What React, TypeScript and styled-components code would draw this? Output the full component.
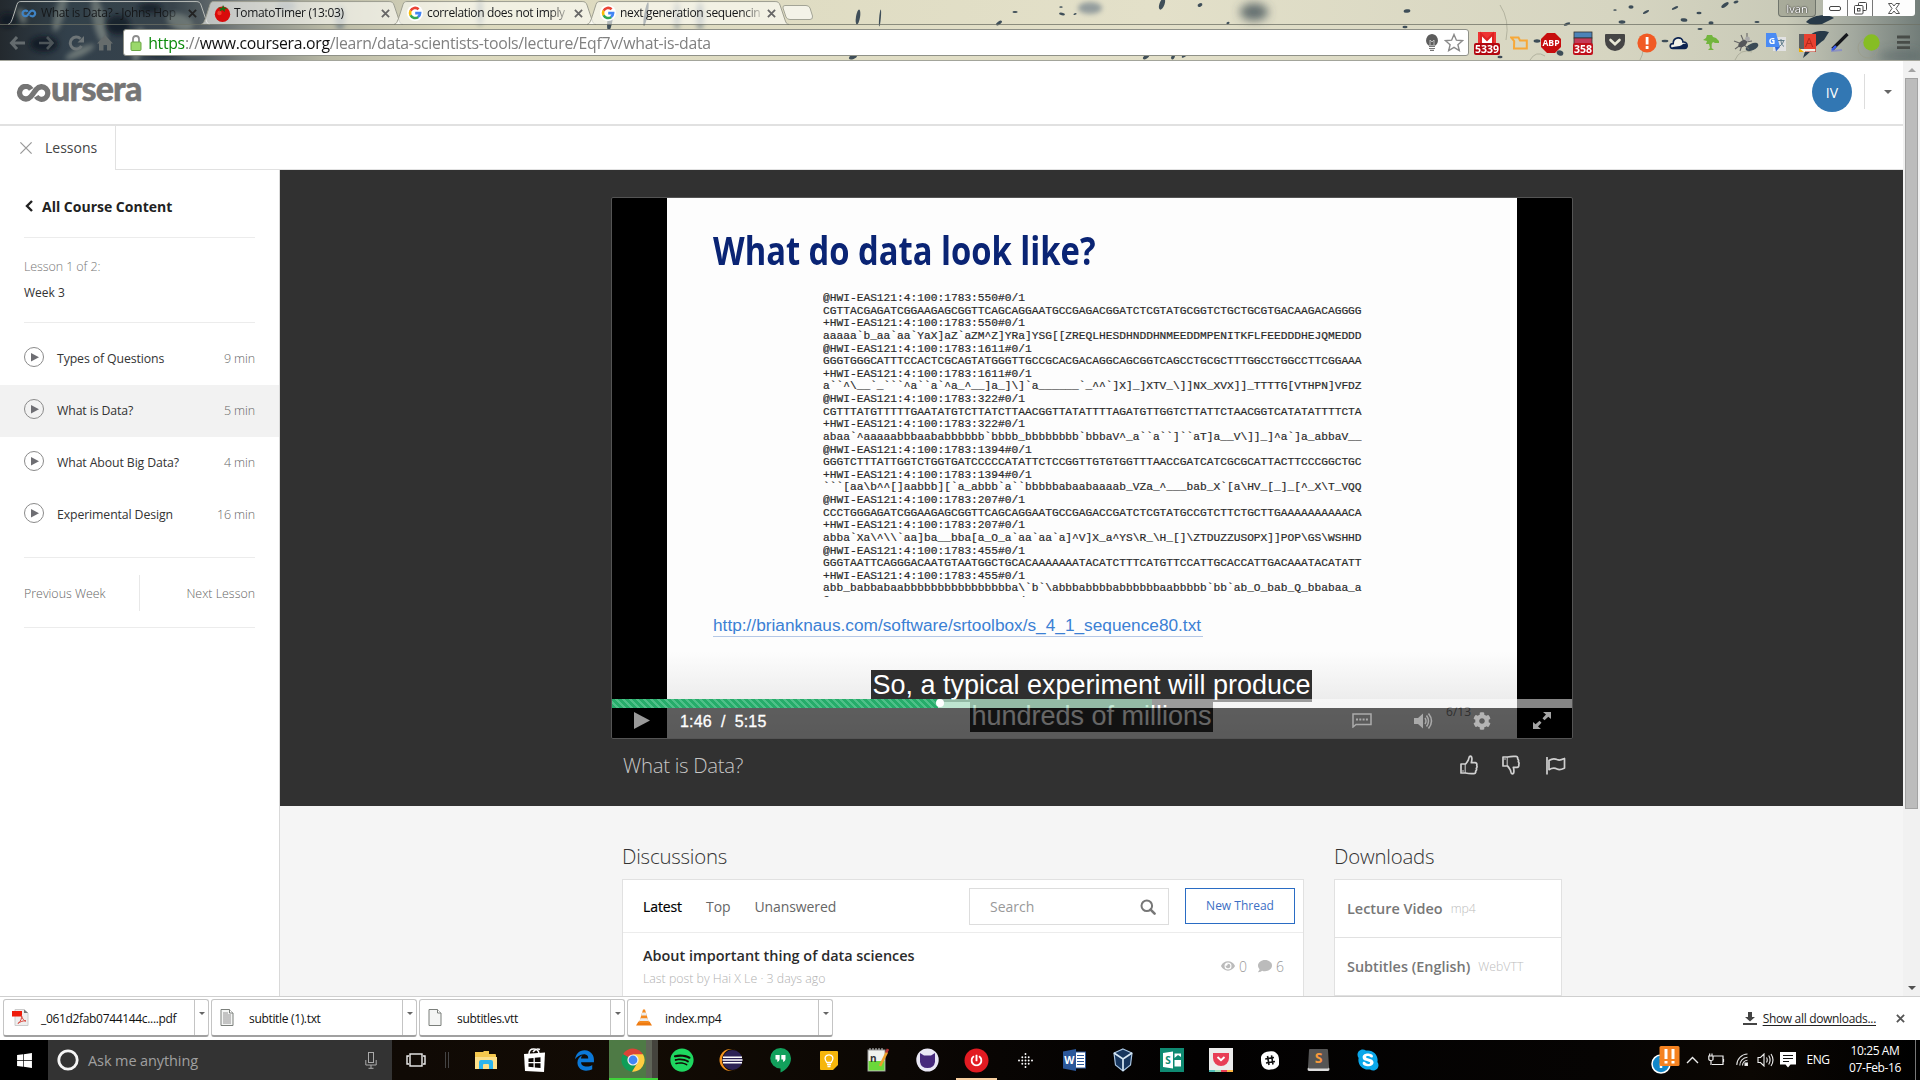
import React from "react";
import styled, { createGlobalStyle, css } from "styled-components";
import { FaSpotify, FaWindows, FaSkype, FaEdgeLegacy, FaCog, FaEye, FaComment, FaPowerOff } from "react-icons/fa";

const Global = createGlobalStyle`
  * { box-sizing: border-box; }
  html, body { margin: 0; padding: 0; }
  body { font-family: "Open Sans", "Noto Sans", sans-serif; overflow: hidden; color: #333; }
  svg { display: block; flex: none; }
`;

const Screen = styled.div`
  width: 1920px;
  height: 1080px;
  display: flex;
  flex-direction: column;
  overflow: hidden;
  background: #fff;
`;

const Spaced = styled.div<{ $l?: number; $r?: number }>`
  margin: 0 ${(p) => p.$r ?? 0}px 0 ${(p) => p.$l ?? 0}px;
`;

/* ---------- browser chrome ---------- */

const Chrome = styled.header`
  position: relative;
  height: 61px;
  flex: none;
  border-bottom: 1px solid #a3a59b;
  overflow: hidden;
`;
const Wallpaper = styled.svg`
  position: absolute;
  inset: 0;
`;
const TabStrip = styled.div`
  position: relative;
  display: flex;
  height: 24px;
  padding-left: 8px;
`;
const TabBox = styled.div`
  position: relative;
  width: 202px;
  height: 24px;
  margin-right: -9px;
  padding: 2px 13px 0 13px;
  display: flex;
  align-items: center;
`;
const TabShape = styled.svg`
  position: absolute;
  left: 0;
  top: 0;
`;
const TabIcon = styled.span`
  position: relative;
  width: 16px;
  height: 16px;
  display: flex;
  align-items: center;
`;
const TabTitle = styled.span`
  position: relative;
  flex: 1;
  min-width: 0;
  margin: -1px 5px 0 4px;
  font-size: 12px;
  letter-spacing: -0.35px;
  line-height: 18px;
  white-space: nowrap;
  color: #16181a;
  mask-image: linear-gradient(90deg, #000 86%, rgba(0, 0, 0, 0.15));
`;
const TabClose = styled.svg`
  position: relative;
`;
const WindowControls = styled.div`
  position: absolute;
  right: 5px;
  top: 0;
  display: flex;
`;
const UserButton = styled.div`
  width: 38px;
  height: 17px;
  margin-right: 7px;
  border: 1px solid #70756c;
  border-top: 0;
  border-radius: 0 0 4px 4px;
  background: rgba(150, 153, 138, 0.65);
  color: #fff;
  font-size: 11px;
  line-height: 17px;
  text-align: center;
  text-shadow: 0 0 2px #222, 0 0 1px #222;
`;
const WinButton = styled.div<{ $w: number }>`
  width: ${(p) => p.$w}px;
  height: 16px;
  background: #fdfdfd;
  border-right: 1px solid #777;
  display: flex;
  align-items: center;
  justify-content: center;
  &:last-child { border-right: 0; border-radius: 0 0 3px 0; }
`;
const Toolbar = styled.div`
  position: relative;
  display: flex;
  align-items: center;
  height: 37px;
  border-top: 1px solid rgba(110, 112, 100, 0.75);
  padding: 0 0 0 3px;
`;
const NavButton = styled.div`
  width: 29.3px;
  display: flex;
  justify-content: center;
`;
const Omnibox = styled.div`
  width: 1346px;
  height: 27px;
  margin: -1px 0 0 3px;
  border: 1px solid #8f9188;
  border-radius: 3px;
  background: #fff;
  display: flex;
  align-items: center;
  gap: 5px;
  padding: 0 4px 0 6px;
`;
const Url = styled.span`
  flex: 1;
  margin: 0 0 0 1px;
  font-size: 15.8px;
  letter-spacing: -0.28px;
  line-height: 22px;
  color: #808080;
  white-space: nowrap;
  b { font-weight: 400; color: #0b8a0b; }
  i { font-style: normal; color: #111; }
`;
const Extensions = styled.div`
  display: flex;
  margin: -1px 0 0 2px;
`;
const Ext = styled.div`
  width: 32.1px;
  height: 30px;
  display: flex;
  align-items: center;
  justify-content: center;
`;

/* ---------- page ---------- */

const Viewport = styled.div`
  display: flex;
  height: 935px;
  flex: none;
  overflow: hidden;
`;
const Page = styled.div`
  width: 1903px;
  display: flex;
  flex-direction: column;
`;
const Scrollbar = styled.div`
  width: 17px;
  background: #f1f1f1;
  display: flex;
  flex-direction: column;
  align-items: center;
  padding: 7px 0 6px;
`;
const Thumb = styled.div`
  width: 13px;
  height: 731px;
  margin: 6px 0 auto;
  background: #bcbcbc;
  border: 1px solid #a3a3a3;
`;
const SiteHeader = styled.div`
  height: 65px;
  flex: none;
  display: flex;
  align-items: center;
  padding: 0 11px 2px 16px;
  border-bottom: 2px solid #e1e1e1;
`;
const Brand = styled.div`
  display: flex;
  align-items: center;
  height: 30px;
  margin: 2px auto 0 0;
  color: #757575;
`;
const BrandName = styled.span`
  font-family: Lato, sans-serif;
  font-weight: 900;
  font-size: 34px;
  line-height: 30px;
  letter-spacing: -0.8px;
  margin: -9px 0 0 -1px;
  -webkit-text-stroke: 0.5px #757575;
`;
const Avatar = styled.div`
  width: 40px;
  height: 40px;
  border-radius: 50%;
  background: #3277b3;
  color: #fff;
  font-size: 14px;
  line-height: 41px;
  text-align: center;
`;
const HeaderRule = styled.div`
  width: 1px;
  height: 35px;
  margin: 0 19px 0 12px;
  background: #ddd;
`;
const LessonBar = styled.div`
  height: 44px;
  flex: none;
  display: flex;
  border-bottom: 1px solid #e1e1e1;
`;
const LessonTab = styled.div`
  width: 116px;
  height: 44px;
  background: #fff;
  border-right: 1px solid #e1e1e1;
  display: flex;
  align-items: center;
  gap: 12px;
  padding: 0 0 1px 19px;
  font-size: 14px;
  color: #444;
`;
const Columns = styled.div`
  display: flex;
  flex: 1;
  min-height: 0;
`;
const Sidebar = styled.nav`
  width: 280px;
  border-right: 1px solid #d9d9d9;
  background: #fff;
  display: flex;
  flex-direction: column;
`;
const BackLink = styled.div`
  height: 68px;
  margin: 0 24px;
  padding: 5px 0 0 1px;
  border-bottom: 1px solid #ececec;
  display: flex;
  align-items: center;
  gap: 9px;
  font-size: 14px;
  font-weight: 700;
  letter-spacing: 0;
  color: #222;
`;
const WeekInfo = styled.div`
  height: 85px;
  margin: 0 24px 10px;
  padding: 16px 0 0;
  border-bottom: 1px solid #ececec;
  font-size: 12px;
  line-height: 26px;
  color: #333;
  span { color: #777; font-weight: 300; font-size: 12.5px; letter-spacing: -0.1px; }
`;
const LessonRow = styled.div<{ $active?: boolean }>`
  height: 52px;
  padding: 0 24px 2px;
  display: flex;
  align-items: center;
  background: ${(p) => (p.$active ? "#f2f2f2" : "transparent")};
  font-size: 12.3px;
  letter-spacing: -0.12px;
  svg { margin: -2px 13px 0 0; }
`;
const LessonTime = styled.span`
  margin-left: auto;
  font-weight: 300;
  font-size: 12.5px;
  color: #666;
`;
const WeekNav = styled.div`
  margin: 16px 24px 0;
  height: 71px;
  padding-top: 1px;
  border-top: 1px solid #ececec;
  border-bottom: 1px solid #ececec;
  display: grid;
  grid-template-columns: 1fr 1px 1fr;
  align-items: center;
  font-size: 12.4px;
  font-weight: 300;
  color: #666;
  span:last-child { text-align: right; }
`;
const NavRule = styled.i`
  width: 1px;
  height: 36px;
  background: #e8e8e8;
`;
const Main = styled.main`
  width: 1623px;
  background: #f5f5f5;
  display: flex;
  flex-direction: column;
`;
const Stage = styled.section`
  height: 636px;
  flex: none;
  background: #313131;
  padding: 27px 0 0 331px;
`;

/* ---------- video player ---------- */

const Player = styled.div`
  position: relative;
  width: 962px;
  height: 542px;
  border: 1px solid #545454;
  background: #000;
  border-radius: 2px;
  overflow: hidden;
`;
const Slide = styled.div`
  position: relative;
  width: 850px;
  height: 540px;
  margin-left: 55px;
  padding: 25px 0 0 46px;
  background: linear-gradient(#fdfdfd 84%, #ececec 93%, #e0e0e0);
`;
const SlideTitle = styled.h1`
  margin: 0;
  width: 500px;
  height: 54px;
  font-size: 40px;
  font-weight: 700;
  line-height: 54px;
  color: #0a2474;
  white-space: nowrap;
  transform: scaleX(0.818);
  transform-origin: 0 0;
`;
const Sequence = styled.pre`
  margin: 15px 0 0 110px;
  height: 305px;
  overflow: hidden;
  font-family: "Liberation Mono", "DejaVu Sans Mono", monospace;
  font-size: 11.22px;
  line-height: 12.63px;
  color: #2a2a2a;
  -webkit-text-stroke: 0.2px #2a2a2a;
`;
const SlideLink = styled.div`
  width: 490px;
  height: 23px;
  margin-top: 17px;
  border-bottom: 1px solid #b5c8e6;
  font-family: "Liberation Sans", Arial, sans-serif;
  font-size: 17.25px;
  line-height: 22px;
  color: #3b80d4;
  white-space: nowrap;
`;
const SlideCount = styled.span`
  position: absolute;
  right: 46px;
  bottom: 18px;
  font-size: 12px;
  color: #777;
`;
const Caption = styled.div<{ $x: number; $y: number; $w: number; $h: number }>`
  position: absolute;
  left: ${(p) => p.$x}px;
  top: ${(p) => p.$y}px;
  width: ${(p) => p.$w}px;
  height: ${(p) => p.$h}px;
  background: #2f2f2f;
  color: #fff;
  font-family: "Liberation Sans", Arial, sans-serif;
  font-size: 27px;
  line-height: 31px;
  text-align: center;
  white-space: nowrap;
`;
const Track = styled.div`
  position: absolute;
  left: 0;
  top: 501px;
  width: 960px;
  height: 9px;
  background: rgba(255, 255, 255, 0.52);
  display: flex;
  align-items: center;
`;
const Played = styled.div`
  width: 326px;
  height: 9px;
  background: repeating-linear-gradient(45deg, #26ac6a 0 3px, #4fc089 3px 4.95px);
`;
const Buffered = styled.div`
  width: 214px;
  height: 9px;
  background: rgba(140, 215, 175, 0.52);
`;
const Knob = styled.div`
  width: 8px;
  height: 8px;
  margin: -2px -6px 0 -2px;
  border-radius: 50%;
  background: #fff;
  position: relative;
`;
const Controls = styled.div`
  position: absolute;
  left: 0;
  top: 510px;
  width: 960px;
  height: 30px;
  background: rgba(0, 0, 0, 0.6);
  display: flex;
  align-items: center;
  padding: 0 21px 5px 22px;
`;
const Clock = styled.span`
  margin: 3px auto 0 30px;
  font-family: "Liberation Sans", Arial, sans-serif;
  font-size: 16px;
  letter-spacing: 0.15px;
  color: #fff;
  white-space: pre;
  -webkit-text-stroke: 0.3px #fff;
`;
const VideoFooter = styled.div`
  display: flex;
  align-items: center;
  width: 961px;
  height: 50px;
  padding: 2px 6px 0 12px;
  color: #c6c6c6;
  font-size: 20.4px;
  font-weight: 300;
  letter-spacing: -0.3px;
  span { margin-right: auto; }
`;

/* ---------- discussions and downloads ---------- */

const Lower = styled.section`
  display: flex;
  flex: 1;
  min-height: 0;
  gap: 30px;
  padding: 34px 0 0 342px;
`;
const Heading = styled.h2`
  margin: 0;
  height: 39px;
  font-size: 20.4px;
  line-height: 32px;
  font-weight: 300;
  letter-spacing: -0.2px;
  color: #333;
`;
const Card = styled.div<{ $w: number }>`
  width: ${(p) => p.$w}px;
  height: 160px;
  border: 1px solid #e1e1e1;
  background: #fff;
`;
const Filters = styled.div`
  height: 53px;
  border-bottom: 1px solid #ececec;
  display: flex;
  align-items: center;
  padding: 0 8px 0 20px;
  font-size: 14px;
  color: #666;
`;
const Filter = styled.span<{ $active?: boolean }>`
  margin-right: 24px;
  letter-spacing: -0.1px;
  ${(p) => p.$active && css`color: #000; -webkit-text-stroke: 0.2px #000;`}
`;
const SearchField = styled.div`
  width: 200px;
  height: 37px;
  margin: 1px 16px 0 auto;
  padding: 0 12px 0 20px;
  border: 1px solid #ddd;
  display: flex;
  align-items: center;
  justify-content: space-between;
  color: #999;
`;
const NewThread = styled.div`
  width: 110px;
  height: 36px;
  border: 1px solid #2a6cc4;
  color: #3c6fc4;
  font-size: 12px;
  line-height: 34px;
  text-align: center;
`;
const Thread = styled.div`
  display: flex;
  padding: 13px 19px 0 20px;
  justify-content: space-between;
`;
const ThreadTitle = styled.div`
  font-size: 14.45px;
  font-weight: 600;
  line-height: 20px;
  color: #2b2b2b;
`;
const ThreadMeta = styled.div`
  margin-top: 3px;
  font-size: 12.35px;
  line-height: 20px;
  color: #b0b0b0;
  font-weight: 300;
`;
const Stats = styled.div`
  display: flex;
  align-items: center;
  height: 20px;
  margin-top: 10px;
  gap: 4px;
  font-size: 14px;
  font-weight: 300;
  color: #999;
  svg { color: #bbb; }
  svg + span { margin-right: 7px; }
  span:last-child { margin-right: 0; }
`;
const DownloadLink = styled.div`
  height: 58px;
  padding: 0 0 0 12px;
  border-bottom: 1px solid #e1e1e1;
  display: flex;
  align-items: center;
  gap: 8px;
  font-size: 14.45px;
  font-weight: 600;
  color: #777;
  small { font-size: 12.3px; font-weight: 300; color: #bdbdbd; }
`;

/* ---------- download shelf ---------- */

const Shelf = styled.div`
  height: 44px;
  flex: none;
  border-top: 1px solid #cfcfcf;
  background: #fff;
  display: flex;
  align-items: center;
  gap: 2px;
  padding: 0 15px 1px 3px;
`;
const FileChip = styled.div`
  width: 206px;
  height: 38px;
  border: 1px solid #c4c4c4;
  border-bottom: 2px solid #a0a0a0;
  border-radius: 3px;
  display: flex;
  font-size: 12px;
  letter-spacing: -0.33px;
  color: #111;
`;
const FileBody = styled.div`
  flex: 1;
  display: grid;
  grid-template-columns: 29px 1fr;
  align-items: center;
  padding: 0 0 0 8px;
  border-right: 1px solid #c4c4c4;
  span { margin: 2px 0 0 0; white-space: nowrap; }
`;
const FileMenu = styled.div`
  width: 13px;
  display: flex;
  justify-content: center;
  padding-top: 12px;
`;
const ShowAll = styled.div`
  margin-left: auto;
  display: flex;
  align-items: center;
  font-size: 12px;
  letter-spacing: -0.32px;
  color: #222;
  u { margin: 1px 20px 0 6px; text-underline-offset: 2px; }
`;

/* ---------- taskbar ---------- */

const Taskbar = styled.footer`
  height: 40px;
  flex: none;
  display: flex;
  background: linear-gradient(90deg, #000 0, #100a05 400px, #120b04 640px, #0b0704 900px, #020101 1200px, #060403 1600px, #0b0703 1750px, #000);
`;
const StartButton = styled.div`
  width: 48px;
  display: flex;
  align-items: center;
  justify-content: center;
  color: #fff;
  background: #000;
`;
const Cortana = styled.div`
  width: 344px;
  background: #333;
  display: flex;
  align-items: center;
  padding: 0 15px 0 9px;
  font-size: 14.5px;
  letter-spacing: -0.1px;
  color: #a0a0a0;
  span { margin: 0 auto 0 9px; }
`;
const TaskView = styled.div`
  width: 70px;
  display: flex;
  align-items: center;
  justify-content: space-between;
  padding: 0 13px 0 14px;
`;
const TaskItem = styled.div<{ $on?: boolean; $mark?: boolean }>`
  position: relative;
  width: 48.98px;
  display: flex;
  align-items: center;
  justify-content: center;
  ${(p) => p.$on && css`background: linear-gradient(90deg, #4e7a45 0 36.5px, #5f6458 36.5px 43px, #44433d 43px); border-bottom: 2px solid #3fd23a; padding-top: 2px;`}
  ${(p) => p.$mark && css`&::after { content: ""; position: absolute; left: 4px; right: 4px; bottom: 0; height: 2px; background: #f7cfa0; }`}
`;
const SkypeBadge = styled.div`
  background: radial-gradient(circle, #fff 45%, transparent 46%);
`;
const Tray = styled.div`
  margin-left: auto;
  display: flex;
  align-items: center;
  color: #fff;
  font-size: 12px;
  letter-spacing: -0.4px;
`;
const TrayIcon = styled.div<{ $w: number }>`
  width: ${(p) => p.$w}px;
  margin-top: -1px;
  display: flex;
  justify-content: center;
`;
const DateTime = styled.div`
  width: 80px;
  margin-top: -2px;
  text-align: center;
  line-height: 17px;
  white-space: nowrap;
`;
const PeekEdge = styled.div`
  width: 5px;
  height: 40px;
  border-left: 1px solid #777;
`;

/* ---------- icons ---------- */

const GoogleG = () => (
  <svg width="16" height="16" viewBox="0 0 16 16">
    <circle cx="8" cy="8" r="8" fill="#fff" />
    <g fill="none" strokeWidth="2.6">
      <path d="M11.6 4.3A5 5 0 0 0 3.6 5.8" stroke="#ea4335" />
      <path d="M3.6 5.6A5.2 5.2 0 0 0 3.6 10.4" stroke="#fbbc05" />
      <path d="M3.6 10.2A5 5 0 0 0 11.3 11.9" stroke="#34a853" />
      <path d="M11 12A5 5 0 0 0 13.1 8.1H8.2" stroke="#4285f4" />
    </g>
  </svg>
);
const Infinity = ({ w, h, color, sw }: { w: number; h: number; color: string; sw: number }) => (
  <svg width={w} height={h} viewBox="0 0 36 18" fill="none" stroke={color} strokeWidth={sw}>
    <path d="M15.2 5.4A6.3 6.3 0 1 0 14.6 12.8C17 10.5 18.4 7.5 20.6 5.1A6.3 6.3 0 1 1 20.2 12.4" />
  </svg>
);
const Tomato = () => (
  <svg width="17" height="17" viewBox="0 0 17 17">
    <circle cx="8.5" cy="9.3" r="7.7" fill="#d90b0b" />
    <circle cx="5.5" cy="8" r="2.2" fill="#f33c2d" />
    <path d="M4 2.5L8 3 9 0l1.5 2.8L14 3l-3.5 1.6L11 7 8.3 5 5.5 6.6 6.5 4.2z" fill="#1f6b12" />
  </svg>
);
const Cross = ({ s = 9, color = "#555", w = 2 }) => (
  <svg width={s} height={s} viewBox="0 0 10 10" stroke={color} strokeWidth={w}>
    <path d="M1 1L9 9M9 1L1 9" />
  </svg>
);
const Caret = ({ w = 8, color = "#555" }) => (
  <svg width={w} height={w / 2} viewBox="0 0 8 4"><path d="M0 0H8L4 4z" fill={color} /></svg>
);
const SearchIcon = () => (
  <svg width="16" height="16" viewBox="0 0 16 16" fill="none" stroke="#777">
    <circle cx="6.8" cy="6.8" r="5.3" strokeWidth="2" />
    <path d="M10.6 10.6L14.6 14.6" strokeWidth="2.5" strokeLinecap="round" />
  </svg>
);
const PlayCircle = () => (
  <svg width="20" height="20" viewBox="0 0 20 20">
    <circle cx="10" cy="10" r="9.5" fill="none" stroke="#8b8b8b" />
    <path d="M7 6L15 10.2 7 14.4z" fill="#6e6e73" />
  </svg>
);
const ThumbOutline = ({ down }: { down?: boolean }) => (
  <svg width="18" height="20" viewBox="0 0 18 20" fill="none" stroke="#d0d0d0" strokeWidth="1.7" strokeLinejoin="round"
    transform={down ? "scale(1,-1)" : undefined}>
    <path d="M5.5 9H1V18H5.5C8 18.6 10 19 14 18.6 16 18.4 15.8 16.6 15.6 16.2 16.8 15.2 16.5 13.8 16.3 13.4 17.4 12 17 10.9 16.7 10.4 17.3 8.6 16 7.7 15.2 7.7H11.3C12 5.5 12.6 1.3 10.2 1.2 8.6 1.2 9 4 8.2 5.2 7.2 6.8 6.3 8.4 5.5 9z" />
    <path d="M5.2 9V18" strokeWidth="1" /><circle cx="3" cy="16" r=".5" strokeWidth=".8" />
  </svg>
);
const FlagIcon = () => (
  <svg width="21" height="19" viewBox="0 0 21 19" fill="none" stroke="#d0d0d0" strokeWidth="1.7" strokeLinejoin="round">
    <path d="M2 1V18.5" />
    <path d="M4 4.5C7 2.5 9.5 2.3 12 3.6 15 5 17 3.7 19.5 2.5V12C17 13.3 15 14.5 12 13 9.5 11.7 7 12 4 13.7z" />
  </svg>
);
const PageIcon = ({ lines }: { lines?: boolean }) => (
  <svg width="14" height="17" viewBox="0 0 14 17">
    <path d="M1 .5H9.5L13 4V16.5H1z" fill="#f4f5f4" stroke="#7b7f7b" />
    <path d="M9.5 .5V4H13" fill="#fff" stroke="#7b7f7b" />
    {lines && <path d="M3 4H8M3 6H11M3 8H11M3 10H11M3 12H11M3 14H11" stroke="#888" strokeWidth=".9" />}
  </svg>
);
const PdfIcon = () => (
  <svg width="17" height="17" viewBox="0 0 17 17">
    <path d="M3 .5H12L16 4V16.5H3z" fill="#eeeeee" stroke="#ccc" />
    <path d="M12 .5V4H16z" fill="#777" />
    <rect y="2" width="10" height="5.5" fill="#ee1c0b" />
    <path d="M6 14.5C9 12 10 9 9.5 6.5 10.5 10 11.5 11.5 14 12 11 11.5 8.5 12.5 6 14.5z" fill="none" stroke="#d9463c" />
  </svg>
);
const Cone = () => (
  <svg width="16" height="17" viewBox="0 0 16 17">
    <path d="M2.5 12.5H13.5L16 16.5H0z" fill="#ee7a10" />
    <path d="M7 .5H9L13 14H3z" fill="#f58a1f" />
    <path d="M6.2 3.5H9.8L10.7 6.5H5.3zM4.5 9.3H11.5L12.3 12H3.7z" fill="#ececec" />
  </svg>
);

const Drops = [
  [610, 20, 3, 13, 8], [646, 14, 2, 14, 10], [858, 17, 2.4, 9, 9], [880, 18, 1, 10, 5], [853, 57, 5, 2.4, -20], [999, 23, 4, 1.8, -35],
  [1015, 12, 3, 1.2, 0], [1062, 14, 3.5, 1.5, 10], [1061, 7, 2, 1, 0], [1075, 14, 2, 1, -20], [1200, 5, 3, 2, -30], [1228, 23, 2, 1.2, -30],
  [1146, 57, 4, 2, -30], [1173, 57, 2, 3, 30], [1184, 56, 3, 1.5, -30], [1162, 4, 3, 7, 20], [1407, 11, 4, 2, -10], [1405, 27, 3, 1.5, 0],
  [1500, 57, 3, 1.5, 0], [1560, 53, 4, 3, 20], [1567, 24, 4, 1.5, -20], [1622, 22, 4, 2, 0], [1631, 7, 3, 2, 0], [1646, 12, 4, 1.4, -30],
  [1675, 8, 4, 1.4, -25], [1684, 20, 4, 2, 10], [1699, 13, 3, 1.4, 0], [1700, 29, 3, 1.2, 0], [1711, 23, 3, 2, 0], [1725, 5, 5, 2, -35],
  [1736, 2, 3, 1.5, -20], [1757, 22, 3, 1.3, 0], [1752, 47, 8, 4, -25], [1665, 41, 4, 1.5, 0], [1615, 10, 2, 1, 0], [1537, 41, 4, 2, 0],
];
const LightStreaks = [
  [60, 12, 5, 20, 15], [99, 20, 6, 24, -12], [138, 45, 5, 18, 10], [22, 16, 4, 8, -20], [180, 22, 14, 8, 20], [190, 50, 12, 5, 0], [80, 52, 16, 4, -25],
];

const Backdrop = () => (
  <Wallpaper width="1920" height="61" viewBox="0 0 1920 61">
    <defs>
      <linearGradient id="sky">
        <stop offset="0" stopColor="#23292e" /><stop offset=".035" stopColor="#32404b" /><stop offset=".09" stopColor="#38434c" />
        <stop offset=".125" stopColor="#7c8280" /><stop offset=".17" stopColor="#b9b9a5" /><stop offset=".24" stopColor="#dcd9be" />
        <stop offset=".6" stopColor="#e3e0c9" /><stop offset=".84" stopColor="#d6d5c1" /><stop offset=".93" stopColor="#c9cab8" />
        <stop offset=".965" stopColor="#a3a99f" /><stop offset="1" stopColor="#727d79" />
      </linearGradient>
      <filter id="soft"><feGaussianBlur stdDeviation="2.5" /></filter>
      <filter id="wide"><feGaussianBlur stdDeviation="5" /></filter>
    </defs>
    <rect width="1920" height="61" fill="url(#sky)" />
    <g filter="url(#soft)" fill="#87908a" opacity=".7">
      {LightStreaks.map(([x, y, rx, ry, a]) => <ellipse key={x} cx={x} cy={y} rx={rx} ry={ry} transform={`rotate(${a} ${x} ${y})`} />)}
    </g>
    <g filter="url(#soft)" fill="#101820" opacity=".8">
      <ellipse cx="8" cy="20" rx="9" ry="7" /><ellipse cx="44" cy="44" rx="14" ry="8" /><ellipse cx="118" cy="25" rx="12" ry="10" />
      <ellipse cx="160" cy="50" rx="14" ry="6" /><ellipse cx="150" cy="8" rx="12" ry="5" />
    </g>
    <g filter="url(#soft)" fill="#52667a" opacity=".55">
      <ellipse cx="340" cy="18" rx="5" ry="12" /><ellipse cx="480" cy="12" rx="3" ry="14" /><ellipse cx="286" cy="6" rx="10" ry="5" />
      <ellipse cx="1090" cy="8" rx="12" ry="6" /><ellipse cx="700" cy="16" rx="4" ry="14" /><ellipse cx="677" cy="16" rx="3" ry="14" />
    </g>
    <g filter="url(#wide)" fill="#46545a"><ellipse cx="1254" cy="12" rx="14" ry="9" opacity=".8" /><ellipse cx="1900" cy="56" rx="22" ry="6" opacity=".4" /></g>
    <g fill="#172b3d">
      {Drops.map(([x, y, rx, ry, a]) => <ellipse key={`${x}-${y}`} cx={x} cy={y} rx={rx * 0.85} ry={ry * 0.85} opacity=".8" transform={`rotate(${a} ${x} ${y})`} />)}
      <path d="M1806 22C1814 14 1828 14 1834 18L1822 24C1816 26 1810 25 1806 22zM1808 38C1812 30 1824 30 1829 32L1824 40C1818 44 1806 56 1803 58 1806 50 1806 44 1808 38z" opacity=".9" />
    </g>
    <g fill="none" stroke="#9a9b88" opacity=".6"><circle cx="1868" cy="48" r="10" /><path d="M1640 60Q1646 50 1640 36M1530 60Q1536 50 1545 56M1735 60Q1740 48 1752 52M1500 5Q1510 20 1506 40" /></g>
  </Wallpaper>
);

const Tab = ({ title, icon, active }: { title: string; icon: React.ReactNode; active?: boolean }) => (
  <TabBox>
    <TabShape width="202" height="25" viewBox="0 0 203 25">
      <path d="M0 24.5C3 24 4 20 6 14L9 4.5C9.8 2 11 1.5 13 1.5H189C192 1.5 193 2.5 194 5L199 20C200 23 201 24.5 203 24.5"
        fill={active ? "rgba(60,70,78,.12)" : "rgba(255,255,250,.6)"} stroke={active ? "#b9bcb8" : "#9c9d90"} />
    </TabShape>
    <TabIcon>{icon}</TabIcon>
    <TabTitle>{title}</TabTitle>
    <TabClose width="9" height="9" viewBox="0 0 10 10" stroke={active ? "#222" : "#666"} strokeWidth="2"><path d="M1 1L9 9M9 1L1 9" /></TabClose>
  </TabBox>
);

const Badge = ({ n, color, children }: { n: string; color: string; children: React.ReactNode }) => (
  <svg width="28" height="26" viewBox="0 0 28 26">
    {children}
    <rect x={n.length > 3 ? 1 : 4} y="13" width={n.length > 3 ? 26 : 20} height="12" rx="2" fill={color} />
    <text x="14" y="22.8" fontSize="10.5" fontWeight="700" fill="#fff" textAnchor="middle" fontFamily="Open Sans, sans-serif">{n}</text>
  </svg>
);

const extensions: React.ReactNode[] = [
  <Badge n="5339" color="#b3060f"><rect x="5" y="2" width="18" height="13" fill="#e33" /><path d="M8 15V4L14 10 20 4V15" fill="#fff" stroke="#d22" strokeWidth="2" /></Badge>,
  <svg width="18" height="14" viewBox="0 0 18 14" fill="none" stroke="#f7a838" strokeWidth="2"><path d="M4 12.5H16.8V4.5H10L8.5 1.5H1.2L4.2 5z" /></svg>,
  <svg width="20" height="20" viewBox="0 0 20 20"><path d="M6 0H14L20 6V14L14 20H6L0 14V6z" fill="#c70d0d" /><text x="10" y="13.3" fontSize="8.6" fontWeight="700" fill="#fff" textAnchor="middle" fontFamily="Open Sans, sans-serif">ABP</text></svg>,
  <Badge n="358" color="#c0101b"><rect x="5" y="2" width="18" height="6" fill="#4c83b8" stroke="#333" strokeWidth=".8" /><rect x="5" y="8" width="18" height="6" fill="#c53a57" stroke="#333" strokeWidth=".8" /></Badge>,
  <svg width="20" height="18" viewBox="0 0 20 18"><path d="M1 0H19Q20 0 20 1V7A10 10 0 0 1 0 7V1Q0 0 1 0z" fill="#454545" /><path d="M5.5 6L10 10.3 14.5 6" fill="none" stroke="#e6e6d4" strokeWidth="2.6" strokeLinecap="round" /></svg>,
  <svg width="20" height="20" viewBox="0 0 20 20"><circle cx="10" cy="10" r="9.6" fill="#f15a24" /><rect x="8.7" y="4" width="2.8" height="7.5" fill="#fff" /><rect x="8.7" y="13" width="2.8" height="3" fill="#fff" /></svg>,
  <svg width="20" height="14" viewBox="0 0 20 14"><path d="M4 12.5C0 12 .5 7.5 4.2 7.6 4 .5 13.5 0 14 6 18.8 5.5 19.5 12 16 12.5z" fill="#f4f4ea" stroke="#0c2350" strokeWidth="1.6" /><path d="M2 13C4 9 10 12 14 8 18 7 20 10 16.5 13z" fill="#0c2350" /></svg>,
  <svg width="18" height="17" viewBox="0 0 18 17"><path d="M1 6L4 4 5 1H10L11 3 14 4 17 7V9H13L11 8 9.7 10V14L12 16H6L8 14 7 10 4 10 5 7z" fill="#72b53d" /></svg>,
  <svg width="20" height="20" viewBox="0 0 20 20"><g stroke="#666" strokeWidth="1.1"><path d="M1 8L9 11M2 16L9 11M8 2L11 9M14 0L14 7M13 9L19 8M11 12L16 16M7 18L9 12" /></g><ellipse cx="10" cy="10.5" rx="5" ry="3" transform="rotate(-35 10 11)" fill="#55575a" /><circle cx="14.500" cy="6" r="2.4" fill="#aaa" /></svg>,
  <svg width="20" height="19" viewBox="0 0 20 19"><rect x="7" y="4" width="13" height="14" fill="#e2e2e2" /><path d="M0 0H10L14 14H0z" fill="#4b8bf4" /><path d="M14 14L10 18.5 9 14z" fill="#3367d6" /><path d="M12 7.5H18.5M15 6V8C15 11 17 13 18 13.5M17.5 8C17 11 14 13 13 13.5" stroke="#607d8b" fill="none" /><text x="6" y="10.5" fontSize="9" fontWeight="700" fill="#fff" textAnchor="middle" fontFamily="Open Sans, sans-serif">G</text></svg>,
  <svg width="17" height="18" viewBox="0 0 17 18"><rect width="17" height="15" fill="#e8402f" /><rect width="5" height="15" fill="#5d6163" /><path d="M0 15H16V18H4z" fill="#f1efe6" /><path d="M0 14L5 18H0z" fill="#f3b200" /><path d="M6 18H17V15" stroke="#c1271b" fill="none" /><text x="10" y="13" fontSize="13" fill="#b1271c" textAnchor="middle" fontFamily="Open Sans, sans-serif">A</text></svg>,
  <svg width="19" height="19" viewBox="0 0 19 19"><path d="M1 18L12 17" stroke="#8b91c2" strokeWidth="2" /><path d="M2.5 16L17.5 1" stroke="#15171c" strokeWidth="3.2" /><path d="M2 17L6 13" stroke="#3b5cf0" strokeWidth="2.4" /></svg>,
  <svg width="17" height="17"><circle cx="8.5" cy="8.5" r="8.2" fill="#86bd24" /></svg>,
  <svg width="13" height="15" viewBox="0 0 13 15" stroke="#484c48" strokeWidth="2.8"><path d="M0 2H13M0 7.3H13M0 12.6H13" /></svg>,
];

const sequenceText = [
  "@HWI-EAS121:4:100:1783:550#0/1",
  "CGTTACGAGATCGGAAGAGCGGTTCAGCAGGAATGCCGAGACGGATCTCGTATGCGGTCTGCTGCGTGACAAGACAGGGG",
  "+HWI-EAS121:4:100:1783:550#0/1",
  "aaaaa`b_aa`aa`YaX]aZ`aZM^Z]YRa]YSG[[ZREQLHESDHNDDHNMEEDDMPENITKFLFEEDDDHEJQMEDDD",
  "@HWI-EAS121:4:100:1783:1611#0/1",
  "GGGTGGGCATTTCCACTCGCAGTATGGGTTGCCGCACGACAGGCAGCGGTCAGCCTGCGCTTTGGCCTGGCCTTCGGAAA",
  "+HWI-EAS121:4:100:1783:1611#0/1",
  "a``^\\__`_```^a``a`^a_^__]a_]\\]`a______`_^^`]X]_]XTV_\\]]NX_XVX]]_TTTTG[VTHPN]VFDZ",
  "@HWI-EAS121:4:100:1783:322#0/1",
  "CGTTTATGTTTTTGAATATGTCTTATCTTAACGGTTATATTTTAGATGTTGGTCTTATTCTAACGGTCATATATTTTCTA",
  "+HWI-EAS121:4:100:1783:322#0/1",
  "abaa`^aaaaabbbaababbbbbb`bbbb_bbbbbbbb`bbbaV^_a``a``]``aT]a__V\\]]_]^a`]a_abbaV__",
  "@HWI-EAS121:4:100:1783:1394#0/1",
  "GGGTCTTTATTGGTCTGGTGATCCCCCATATTCTCCGGTTGTGTGGTTTAACCGATCATCGCGCATTACTTCCCGGCTGC",
  "+HWI-EAS121:4:100:1783:1394#0/1",
  "```[aa\\b^^[]aabbb][`a_abbb`a``bbbbbabaabaaaab_VZa_^___bab_X`[a\\HV_[_]_[^_X\\T_VQQ",
  "@HWI-EAS121:4:100:1783:207#0/1",
  "CCCTGGGAGATCGGAAGAGCGGTTCAGCAGGAATGCCGAGACCGATCTCGTATGCCGTCTTCTGCTTGAAAAAAAAAACA",
  "+HWI-EAS121:4:100:1783:207#0/1",
  "abba`Xa\\^\\\\`aa]ba__bba[a_O_a`aa`aa`a]^V]X_a^YS\\R_\\H_[]\\ZTDUZZUSOPX]]POP\\GS\\WSHHD",
  "@HWI-EAS121:4:100:1783:455#0/1",
  "GGGTAATTCAGGGACAATGTAATGGCTGCACAAAAAAATACATCTTTCATGTTCCATTGCACCATTGACAAATACATATT",
  "+HWI-EAS121:4:100:1783:455#0/1",
  "abb_babbabaa" + "b".repeat(16) + "a\\`b`\\abbbabbbbabbbbbbaabbbbb`bb`ab_O_bab_Q_bbabaa_a",
  "@HWI-EAS121:4:100:1783:1837#0/1",
].join("\n");

const lessons = [
  ["Types of Questions", "9 min"],
  ["What is Data?", "5 min"],
  ["What About Big Data?", "4 min"],
  ["Experimental Design", "16 min"],
];

const files: [string, React.ReactNode][] = [
  ["_061d2fab0744144c....pdf", <PdfIcon />],
  ["subtitle (1).txt", <PageIcon lines />],
  ["subtitles.vtt", <PageIcon />],
  ["index.mp4", <Cone />],
];

const apps: React.ReactNode[] = [
  <svg width="22" height="19" viewBox="0 0 22 19"><path d="M0 1H8L9 0H14V3H20Q21 3 21 4V18H0z" fill="#f5c84e" /><path d="M0 6H22V18H0z" fill="#fde08a" /><path d="M4 18V11Q4 9 6 9H16Q18 9 18 11V18H14V14Q14 13 13 13H9Q8 13 8 14V18z" fill="#2ab4ee" /></svg>,
  <svg width="22" height="24" viewBox="0 0 22 24"><path d="M0 6L21 4.500 20 24 1 23z" fill="#fff" /><path d="M5 6Q5 1 9.500 1T15 5M9 4Q12 0 16 1.5" fill="none" stroke="#fff" strokeWidth="1.500" /><path d="M4.500 10.500L9.500 10V14H4.500zM10.800 9.800L16.500 9.200V14H10.800zM4.500 15.300H9.500V19.300L4.500 18.800zM10.800 15.300H16.500V20L10.800 19.400z" fill="#0b0704" /></svg>,
  <FaEdgeLegacy size={21} color="#0b78d7" />,
  <svg width="24" height="24" viewBox="0 0 24 24"><path d="M12 12L2 6.2A11.7 11.7 0 0 1 22 6.3z" fill="#db4437" /><path d="M12 12L2 6.2A11.7 11.7 0 0 0 11 23.6L16 14z" fill="#0f9d58" /><path d="M12 6.3H22A11.7 11.7 0 0 1 11 23.7L17 14z" fill="#ffcd40" /><circle cx="12" cy="12" r="5.6" fill="#f1f1f1" /><circle cx="12" cy="12" r="4.4" fill="#4285f4" /></svg>,
  <FaSpotify size={24} color="#1ed760" />,
  <svg width="24" height="24" viewBox="0 0 24 24"><circle cx="11.5" cy="12" r="11" fill="#f7941e" /><circle cx="14" cy="12" r="11" fill="#120b04" /><circle cx="13.5" cy="12" r="10" fill="#2c2255" /><path d="M4 9.2H23M3.5 12H23.5M4 14.8H23" stroke="#fff" strokeWidth="1.4" /></svg>,
  <svg width="21" height="25" viewBox="0 0 21 25"><path d="M10.5 0A10.3 10.3 0 0 0 10.5 20.6V24.6C16 22 21 17 21 10.3A10.4 10.4 0 0 0 10.5 0z" fill="#12a05c" /><path d="M5.5 7H9.7V11.3Q9.4 13.5 7.3 14V11.5H5.5zM11.3 7H15.5V11.3Q15.2 13.5 13.1 14V11.5H11.3z" fill="#fff" /></svg>,
  <svg width="18" height="19" viewBox="0 0 18 19"><path d="M1 0H17Q18 0 18 1V14L13 19H1Q0 19 0 18V1Q0 0 1 0z" fill="#f6b60b" /><path d="M6.8 11.500Q3.500 7 6.500 4.600 9 3 11.500 4.600 14.500 7 11.200 11.500zM7 13.500H11M7.500 15.500H10.500" fill="none" stroke="#fff" strokeWidth="1.300" /></svg>,
  <svg width="22" height="24" viewBox="0 0 22 24"><rect x="1" y="2" width="17" height="21" fill="#f1f3ee" stroke="#999" /><path d="M1.500 13H17.500V22.500H1.500z" fill="#6bd83a" /><path d="M3 2V0M6 2V0M9 2V0M12 2V0M15 2V0" stroke="#ccc" /><text x="3" y="14" fontSize="10" fontWeight="700" fill="#333" fontFamily="Open Sans, sans-serif">n</text><path d="M20 4L13 18" stroke="#eda02c" strokeWidth="2.600" /><path d="M19.200 4.500L21 1" stroke="#b33" strokeWidth="2.600" /></svg>,
  <svg width="23" height="24" viewBox="0 0 23 24"><ellipse cx="11.500" cy="12" rx="11.200" ry="11.500" fill="#e9e7f5" /><path d="M4 5L8 7.500H15L19 5V14Q18 20 11.500 20T4 14z" fill="#46297c" /></svg>,
  <svg width="25" height="25" viewBox="0 0 25 25"><circle cx="12.500" cy="12.500" r="12" fill="#e21b22" /><FaPowerOff x="6.500" y="6.500" size={12} color="#fff" /></svg>,
  <svg width="15" height="15" viewBox="0 0 15 15" fill="#fff">
    {[[7.5, 1], [4.3, 4.3], [7.5, 4.3], [10.7, 4.3], [1, 7.5], [4.3, 7.5], [7.5, 7.5], [10.7, 7.5], [14, 7.5], [4.3, 10.7], [7.5, 10.7], [10.7, 10.7], [7.5, 14]].map(([x, y]) => <circle key={`${x} ${y}`} cx={x} cy={y} r=".95" />)}
  </svg>,
  <svg width="23" height="22" viewBox="0 0 23 22"><rect x="10" y="3" width="12.500" height="16" fill="#fff" stroke="#2b579a" /><path d="M14 6.500H21M14 9.500H21M14 12.500H21M14 15.500H21" stroke="#2b579a" /><path d="M0 2.500L13 0V22L0 19.500z" fill="#2b579a" /><text x="6.300" y="15" fontSize="10.500" fontWeight="700" fill="#fff" textAnchor="middle" fontFamily="Open Sans, sans-serif">W</text></svg>,
  <svg width="20" height="24" viewBox="0 0 20 24"><path d="M10 1L19 5 17.500 17 10 23 2.500 17 1 5z" fill="#17365e" stroke="#a9c6e3" strokeWidth="1.200" /><path d="M1 5L10 11 19 5M10 11V23" fill="none" stroke="#d7e8f5" strokeWidth="1.700" /></svg>,
  <svg width="24" height="24" viewBox="0 0 24 24"><rect width="24" height="24" fill="#0f8a72" /><path d="M3 5L13 3.500V20.500L3 19z" fill="#fff" /><path d="M14.500 5.500H21V9L18 7 14.500 10zM14.500 12H21V18.500H14.500z" fill="#fff" /><text x="8" y="16" fontSize="10" fontWeight="700" fill="#0f8a72" textAnchor="middle" fontFamily="Open Sans, sans-serif">S</text></svg>,
  <svg width="24" height="24" viewBox="0 0 24 24"><rect width="24" height="24" fill="#ececec" /><path d="M4 5H20V10A8 8 0 0 1 4 10z" fill="#e83e56" /><path d="M8.500 9L12 12.300 15.500 9" fill="none" stroke="#fff" strokeWidth="1.900" /><path d="M0 22H6V24H0z" fill="#50bcb6" /><path d="M6 22H12V24H6z" fill="#9fdcb4" /><path d="M12 22H18V24H12z" fill="#e83e56" /><path d="M18 22H24V24H18z" fill="#fcb643" /></svg>,
  <svg width="18" height="19" viewBox="0 0 18 19"><rect x="0" y="0.500" width="18" height="18" rx="7" fill="#fff" transform="rotate(-8 9 9)" /><path d="M6.500 5L8 14M10.500 4.300L12 13.500M4.200 8L13 6.500M5 12L14 10.500" stroke="#111" strokeWidth="1.600" /></svg>,
  <svg width="23" height="22" viewBox="0 0 23 22"><path d="M2 16H21L22.500 20Q22.500 22 21 22H2Q.5 22 .5 20z" fill="#ddd" /><path d="M3 0H20Q21 0 21 1L22 18Q22 19.500 20.500 19.500H2.500Q1 19.500 1 18L2 1Q2 0 3 0z" fill="#555" /><text x="11.500" y="13.500" fontSize="14" fontWeight="700" fill="#f6993b" textAnchor="middle" fontFamily="Open Sans, sans-serif">S</text></svg>,
  <SkypeBadge><FaSkype size={24} color="#0aa7ea" /></SkypeBadge>,
];

export default function App() {
  return (
    <Screen>
      <Global />
      <Chrome>
        <Backdrop />
        <TabStrip>
          <Tab active title="What is Data? - Johns Hop" icon={<Infinity w={16} h={9} color="#3f83c4" sw={5} />} />
          <Tab title="TomatoTimer (13:03)" icon={<Tomato />} />
          <Tab title="correlation does not imply" icon={<GoogleG />} />
          <Tab title="next generation sequencin" icon={<GoogleG />} />
          <svg width="34" height="20" viewBox="0 0 34 20"><path d="M5 5.500H26Q29 5.500 30 8L32.500 16Q33 19.500 30 19.500H10Q7 19.500 6 17L3 8Q2.500 5.500 5 5.500z" fill="rgba(255,255,252,.65)" stroke="#a3a496" /></svg>
          <WindowControls>
            <UserButton>Ivan</UserButton>
            <WinButton $w={25}><svg width="12" height="5"><rect x=".5" y=".5" width="11" height="4" rx="1.500" fill="#fff" stroke="#444" /></svg></WinButton>
            <WinButton $w={25}><svg width="13" height="13" fill="#fff" stroke="#444"><rect x="4.500" y=".5" width="8" height="8" rx="1" /><rect x=".5" y="3.500" width="8.500" height="8.500" rx="1" /><rect x="3.500" y="6.500" width="2.500" height="2.500" /></svg></WinButton>
            <WinButton $w={42}><svg width="12" height="11" viewBox="0 0 12 11"><path d="M.5 .5H4L6 3 8 .5H11.500L8 5.500 11.500 10.500H8L6 8 4 10.500H.5L4 5.500z" fill="#fff" stroke="#444" strokeWidth=".9" /></svg></WinButton>
          </WindowControls>
        </TabStrip>
        <Toolbar>
          <NavButton><svg width="17" height="14" viewBox="0 0 17 14" fill="none" stroke="#646b6e" strokeWidth="3"><path d="M8 1L2.500 7 8 13M2.500 7H16" /></svg></NavButton>
          <NavButton><svg width="17" height="14" viewBox="0 0 17 14" fill="none" stroke="#4c5458" strokeWidth="2.600"><path d="M9 1L14.500 7 9 13M14.500 7H1" /></svg></NavButton>
          <NavButton><svg width="17" height="16" viewBox="0 0 17 16"><path d="M13.500 11A6 6 0 1 1 12.500 3.800" fill="none" stroke="#6e7577" strokeWidth="3" /><path d="M9.500 7.500H16V1z" fill="#6e7577" /></svg></NavButton>
          <NavButton><svg width="16" height="16" viewBox="0 0 16 16"><path d="M8 0L16 8.500H14V15.500H10V10H6.500V15.500H2V8.500H0z" fill="#666c6c" /></svg></NavButton>
          <Omnibox>
            <svg width="12" height="16" viewBox="0 0 12 16"><path d="M3 8V4Q3 1 6 1T9 4V8" fill="none" stroke="#8d8d8d" strokeWidth="1.800" /><rect x="1" y="7" width="10" height="8.500" rx="1" fill="#9ad86a" stroke="#6aa644" /></svg>
            <Url><b>https</b>://<i>www.coursera.org</i>/learn/data-scientists-tools/lecture/Eqf7v/what-is-data</Url>
            <svg width="14" height="17" viewBox="0 0 14 17"><path d="M7 0A6.500 6.500 0 0 1 10.500 11.500H3.500A6.500 6.500 0 0 1 7 0z" fill="#5d5d5d" /><path d="M4 12.500H10M4 14.500H10M5 16.300H9" stroke="#777" strokeWidth="1.200" /><path d="M5 11V6L7 8 9 6V11" fill="none" stroke="#bbb" /></svg>
            <svg width="20" height="19" viewBox="0 0 20 19"><path d="M10 1.500L12.400 7.200 18.500 7.700 13.900 11.700 15.300 17.600 10 14.400 4.700 17.600 6.100 11.700 1.500 7.700 7.600 7.200z" fill="#fff" stroke="#8a8a8a" strokeWidth="1.400" /></svg>
          </Omnibox>
          <Extensions>{extensions.map((e, i) => <Ext key={i}>{e}</Ext>)}</Extensions>
        </Toolbar>
      </Chrome>

      <Viewport>
        <Page>
          <SiteHeader>
            <Brand><Infinity w={36} h={18} color="#757575" sw={5.3} /><BrandName>ursera</BrandName></Brand>
            <Avatar>IV</Avatar>
            <HeaderRule />
            <Caret w={8} color="#666" />
          </SiteHeader>
          <LessonBar><LessonTab><Cross s={14} color="#999" w={0.9} />Lessons</LessonTab></LessonBar>
          <Columns>
            <Sidebar>
              <BackLink>
                <svg width="8" height="12" viewBox="0 0 8 12" fill="none" stroke="#222" strokeWidth="2.400"><path d="M7 1L2 6 7 11" /></svg>
                All Course Content
              </BackLink>
              <WeekInfo><span>Lesson 1 of 2:</span><br />Week 3</WeekInfo>
              {lessons.map(([name, time], i) => (
                <LessonRow key={name} $active={i === 1}><PlayCircle />{name}<LessonTime>{time}</LessonTime></LessonRow>
              ))}
              <WeekNav><span>Previous Week</span><NavRule /><span>Next Lesson</span></WeekNav>
            </Sidebar>
            <Main>
              <Stage>
                <Player>
                  <Slide>
                    <SlideTitle>What do data look like?</SlideTitle>
                    <Sequence>{sequenceText}</Sequence>
                    <SlideLink>http://brianknaus.com/software/srtoolbox/s_4_1_sequence80.txt</SlideLink>
                    <SlideCount>6/13</SlideCount>
                  </Slide>
                  <Caption $x={259} $y={472} $w={441} $h={32}>So, a typical experiment will produce</Caption>
                  <Caption $x={358} $y={503} $w={243} $h={31}>hundreds of millions</Caption>
                  <Track><Played /><Knob /><Buffered /></Track>
                  <Controls>
                    <svg width="16" height="17" viewBox="0 0 16 17"><path d="M0 0L16 8.500 0 17z" fill="#999" /></svg>
                    <Clock>{"1:46  /  5:15"}</Clock>
                    <svg width="20" height="15" viewBox="0 0 20 15" fill="none" stroke="#aaa" strokeWidth="1.500"><path d="M1 14V1H19V11.500H4z" /><path d="M4 6.500H16.500" strokeWidth="2" strokeDasharray="2 1.300" /></svg>
                    <Spaced $l={42} $r={39}>
                      <svg width="20" height="16" viewBox="0 0 20 16"><path d="M0 5H4L9 .5V15.500L4 11H0z" fill="#aaa" /><path d="M11 5Q13 8 11 11M12.500 2.500Q16.500 8 12.500 13.500M14.500 .5Q20.500 8 14.500 15.500" fill="none" stroke="#aaa" strokeWidth="1.500" /></svg>
                    </Spaced>
                    <FaCog size={18} color="#b4b4b4" />
                    <Spaced $l={42}>
                      <svg width="18" height="17" viewBox="0 0 18 17"><path d="M10 0H18V7L15.300 4.700 11.500 8.200 9.500 6.300 13 2.500zM0 17V10L2.600 12.300 6.500 8.800 8.500 10.700 5 14.500 8 17z" fill="#a5a5a5" /></svg>
                    </Spaced>
                  </Controls>
                </Player>
                <VideoFooter>
                  <span>What is Data?</span>
                  <ThumbOutline />
                  <Spaced $l={24} $r={25}><ThumbOutline down /></Spaced>
                  <FlagIcon />
                </VideoFooter>
              </Stage>
              <Lower>
                <div>
                  <Heading>Discussions</Heading>
                  <Card $w={682}>
                    <Filters>
                      <Filter $active>Latest</Filter><Filter>Top</Filter><Filter>Unanswered</Filter>
                      <SearchField>Search<SearchIcon /></SearchField>
                      <NewThread>New Thread</NewThread>
                    </Filters>
                    <Thread>
                      <div>
                        <ThreadTitle>About important thing of data sciences</ThreadTitle>
                        <ThreadMeta>Last post by Hai X Le · 3 days ago</ThreadMeta>
                      </div>
                      <Stats><FaEye size={14} /><span>0</span><FaComment size={14} /><span>6</span></Stats>
                    </Thread>
                  </Card>
                </div>
                <div>
                  <Heading>Downloads</Heading>
                  <Card $w={228}>
                    <DownloadLink>Lecture Video<small>mp4</small></DownloadLink>
                    <DownloadLink>Subtitles (English)<small>WebVTT</small></DownloadLink>
                  </Card>
                </div>
              </Lower>
            </Main>
          </Columns>
        </Page>
        <Scrollbar>
          <svg width="8" height="4" viewBox="0 0 8 4"><path d="M0 4H8L4 0z" fill="#a3a3a3" /></svg>
          <Thumb />
          <Caret w={8} color="#505050" />
        </Scrollbar>
      </Viewport>

      <Shelf>
        {files.map(([name, icon]) => (
          <FileChip key={name}><FileBody>{icon}<span>{name}</span></FileBody><FileMenu><Caret w={6} color="#666" /></FileMenu></FileChip>
        ))}
        <ShowAll>
          <svg width="14" height="13" viewBox="0 0 14 13" fill="#444"><path d="M5 0H9V5H12L7 9.500 2 5H5zM0 11H14V13H0z" /></svg>
          <u>Show all downloads...</u>
          <Cross s={9} color="#555" w={2} />
        </ShowAll>
      </Shelf>

      <Taskbar>
        <StartButton><FaWindows size={17} /></StartButton>
        <Cortana>
          <svg width="22" height="22"><circle cx="11" cy="11" r="9.200" fill="none" stroke="#f5f5f5" strokeWidth="2.800" /></svg>
          <span>Ask me anything</span>
          <svg width="12" height="17" viewBox="0 0 12 17" fill="none" stroke="#aaa"><rect x="3.500" y=".5" width="5" height="10" /><path d="M.8 8V13H11.200V8M6 13V16M3.500 16.300H8.500" /></svg>
        </Cortana>
        <TaskView>
          <svg width="20" height="14" viewBox="0 0 20 14" fill="none" stroke="#eee" strokeWidth="1.400"><rect x="4" y="1" width="12" height="12" /><path d="M3 3H1V11H3M17 3H19V11H17" /></svg>
          <svg width="4" height="16" stroke="#444"><path d="M.5 0V16M3.500 0V16" /></svg>
        </TaskView>
        {apps.map((icon, i) => <TaskItem key={i} $on={i === 3} $mark={i === 10}>{icon}</TaskItem>)}
        <Tray>
          <TrayIcon $w={30}><svg width="30" height="34" viewBox="0 0 30 34"><circle cx="10" cy="21" r="9" fill="#1287c9" stroke="#fff" strokeWidth="1.500" /><path d="M9 15Q13 17 10 21V25" stroke="#fff" strokeWidth="2.500" fill="none" /><rect x="8.500" y="3" width="20" height="20" rx="1.500" fill="#f58220" /><path d="M15 6V16M22 6V16M15 18V20.500M22 18V20.500" stroke="#fff" strokeWidth="3" /></svg></TrayIcon>
          <TrayIcon $w={23}><svg width="13" height="8" viewBox="0 0 13 8" fill="none" stroke="#eee" strokeWidth="1.400"><path d="M1 7L6.500 1.500 12 7" /></svg></TrayIcon>
          <TrayIcon $w={25}><svg width="17" height="13" viewBox="0 0 17 13" fill="none" stroke="#eee" strokeWidth="1.200"><path d="M5 3H15V11.500H4M15.500 6V9M.8 3V6Q.8 7.500 3 7.500T5 6V3zM1.700 3V.5M4 3V.5M3 7.500V12" /></svg></TrayIcon>
          <TrayIcon $w={26}><svg width="12" height="13" viewBox="0 0 12 13" fill="none" stroke="#ddd" strokeWidth="1.100"><path d="M.8 12A11 11 0 0 1 11.500 1M3.800 12.500A8 8 0 0 1 11.500 4.200M6.500 12.500A5 5 0 0 1 11.500 7.200" /><rect x="9" y="10" width="2.500" height="2.500" fill="#fff" /></svg></TrayIcon>
          <TrayIcon $w={20}><svg width="17" height="14" viewBox="0 0 17 14" fill="none" stroke="#eee" strokeWidth="1.100"><path d="M1 4.500H3.500L7 1V13L3.500 9.500H1zM9.500 4.500Q11 7 9.500 9.500M11.700 2.500Q14.500 7 11.700 11.500M14 1Q18 7 14 13" /></svg></TrayIcon>
          <TrayIcon $w={26}><svg width="16" height="16" viewBox="0 0 16 16"><path d="M0 0H16V12.500H10.500L8 15.500 5.500 12.500H0z" fill="#fff" /><path d="M3 3.500H13M3 6.500H13M3 9.500H9" stroke="#111" strokeWidth="1.200" /></svg></TrayIcon>
          <TrayIcon $w={34}>ENG</TrayIcon>
          <DateTime>10:25 AM<br />07-Feb-16</DateTime>
          <PeekEdge />
        </Tray>
      </Taskbar>
    </Screen>
  );
}
